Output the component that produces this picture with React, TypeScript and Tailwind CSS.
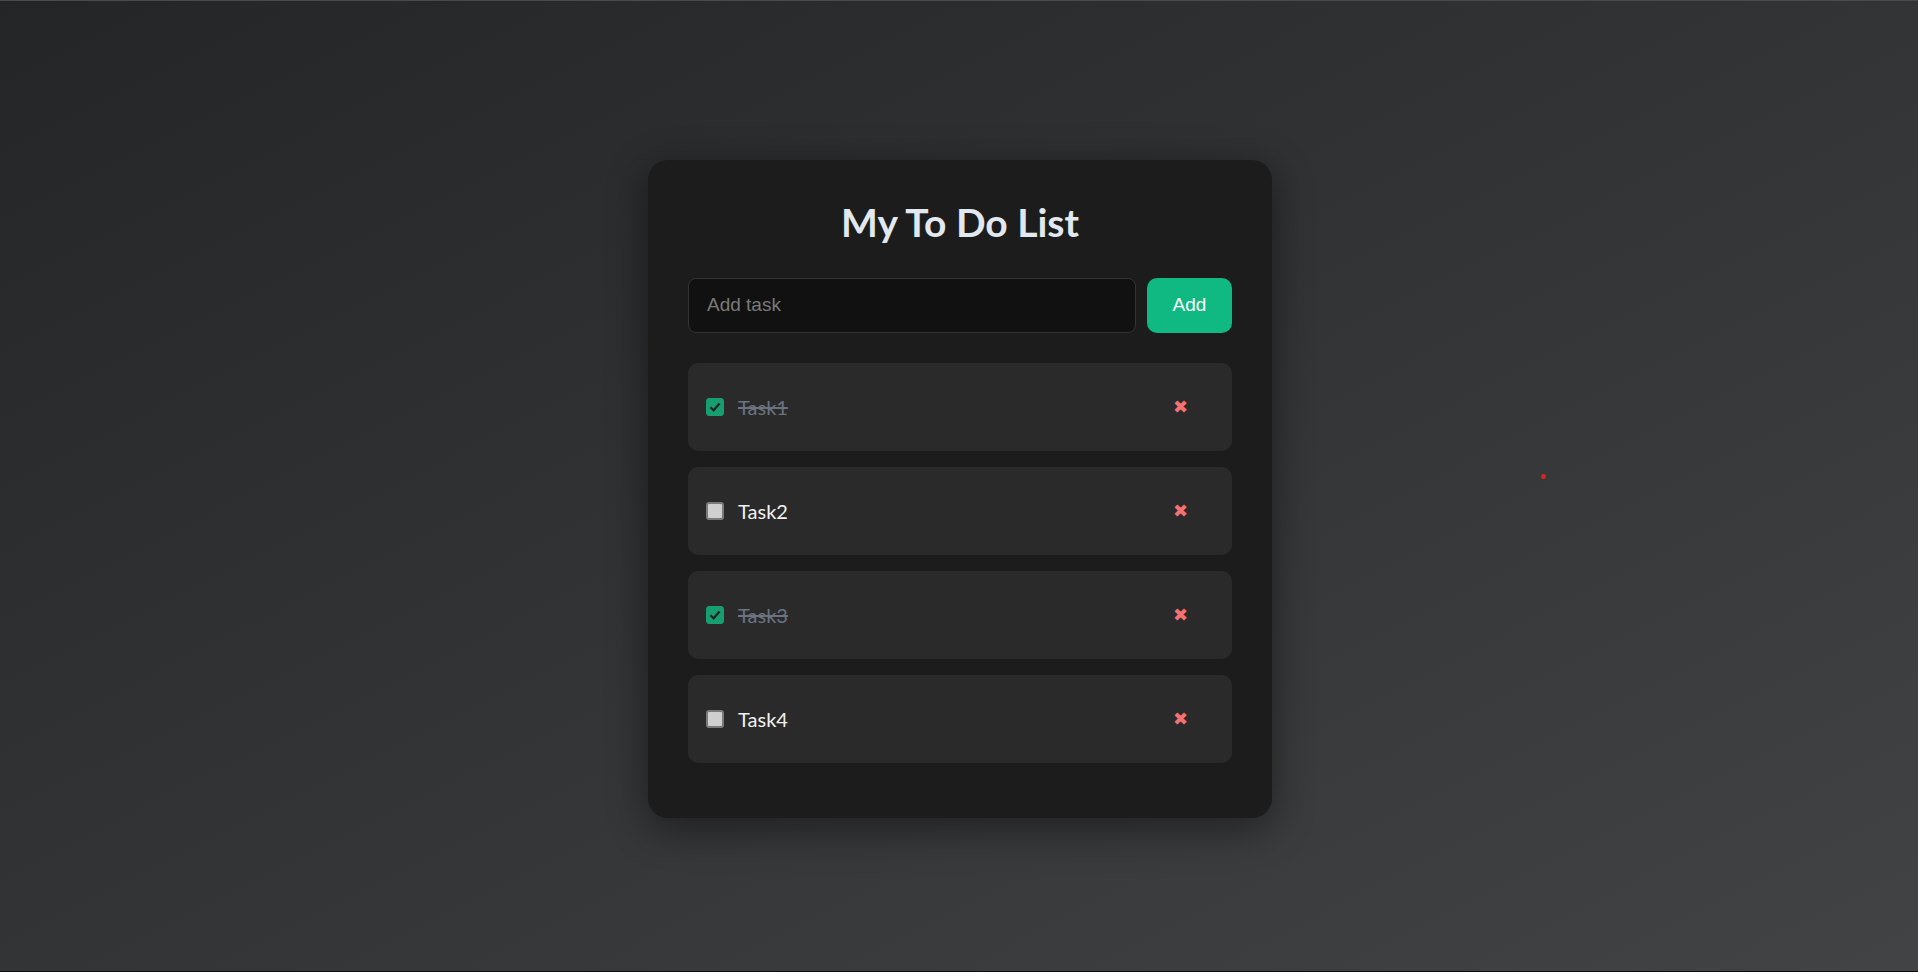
import { useState } from "react";

type Task = { id: number; text: string; done: boolean };

const initialTasks: Task[] = [
  { id: 1, text: "Task1", done: true },
  { id: 2, text: "Task2", done: false },
  { id: 3, text: "Task3", done: true },
  { id: 4, text: "Task4", done: false },
];

const App = () => {
  const [tasks, setTasks] = useState<Task[]>(initialTasks);
  const [input, setInput] = useState("");

  const addTask = () => {
    if (!input.trim()) return;
    setTasks([...tasks, { id: Date.now(), text: input.trim(), done: false }]);
    setInput("");
  };

  const toggle = (id: number) =>
    setTasks(tasks.map((t) => (t.id === id ? { ...t, done: !t.done } : t)));

  const remove = (id: number) => setTasks(tasks.filter((t) => t.id !== id));

  return (
    <div className="relative min-h-screen h-[972px] flex items-center justify-center pt-[5px] pl-[2px] bg-gradient-to-br from-[#232526] to-[#414345] border-t border-t-[#4a4a4a] border-b border-b-[#0c0c0c]">
      <div className="w-[624px] bg-[#1c1c1c] rounded-[20px] px-10 pt-[39px] pb-[55px] shadow-[0_10px_40px_rgba(0,0,0,0.45)]">
        <h1 className="h-[48px] flex items-center justify-center text-[39px] font-bold text-[#e2e8f0] font-['Lato',sans-serif]">
          My To Do List
        </h1>

        <div className="flex gap-[11px] mt-[31px]">
          <input
            value={input}
            onChange={(e) => setInput(e.target.value)}
            onKeyDown={(e) => e.key === "Enter" && addTask()}
            placeholder="Add task"
            className="flex-1 h-[55px] px-[18px] rounded-lg bg-[#111111] border border-[#333333] text-white text-[19px] placeholder:text-[#7a7a7a] outline-none font-['Liberation_Sans',Arial,sans-serif]"
          />
          <button
            onClick={addTask}
            className="w-[85px] h-[55px] rounded-[10px] bg-[#10b981] text-white text-[19px] font-['Liberation_Sans',Arial,sans-serif]"
          >
            Add
          </button>
        </div>

        <ul className="mt-[30px] flex flex-col gap-4">
          {tasks.map((task) => (
            <li
              key={task.id}
              className="h-[88px] flex items-center pl-[18px] pr-[44px] bg-[#2a2a2a] rounded-[10px]"
            >
              <label className="relative flex items-center cursor-pointer">
                <input
                  type="checkbox"
                  checked={task.done}
                  onChange={() => toggle(task.id)}
                  className={
                    task.done
                      ? "appearance-none w-[18px] h-[18px] rounded-[3px] bg-[#179e70] border border-[#179e70]"
                      : "appearance-none w-[18px] h-[18px] rounded-[3px] bg-[#cfcfcf] border-2 border-[#7a7a7a]"
                  }
                />
                {task.done && (
                  <svg
                    className="absolute left-[3px] top-[3px] pointer-events-none"
                    width="12"
                    height="12"
                    viewBox="0 0 12 12"
                  >
                    <path d="M1.5 6.3 L4.6 9.3 L10.6 2.6" fill="none" stroke="#232323" strokeWidth="2.2" />
                  </svg>
                )}
              </label>
              <span
                className={
                  task.done
                    ? "ml-[14px] flex-1 text-[20px] text-[#6b7280] line-through font-['Lato',sans-serif]"
                    : "ml-[14px] flex-1 text-[20px] text-[#f1f1f1] font-['Lato',sans-serif]"
                }
              >
                {task.text}
              </span>
              <button
                onClick={() => remove(task.id)}
                className="text-[#f87171] text-[18px] leading-none font-['DejaVu_Sans',sans-serif]"
              >
                ✖
              </button>
            </li>
          ))}
        </ul>
      </div>

      <span className="absolute left-[1541px] top-[473px] w-[5px] h-[5px] rounded-full bg-[#e02020]" />
    </div>
  );
};

export default App;
